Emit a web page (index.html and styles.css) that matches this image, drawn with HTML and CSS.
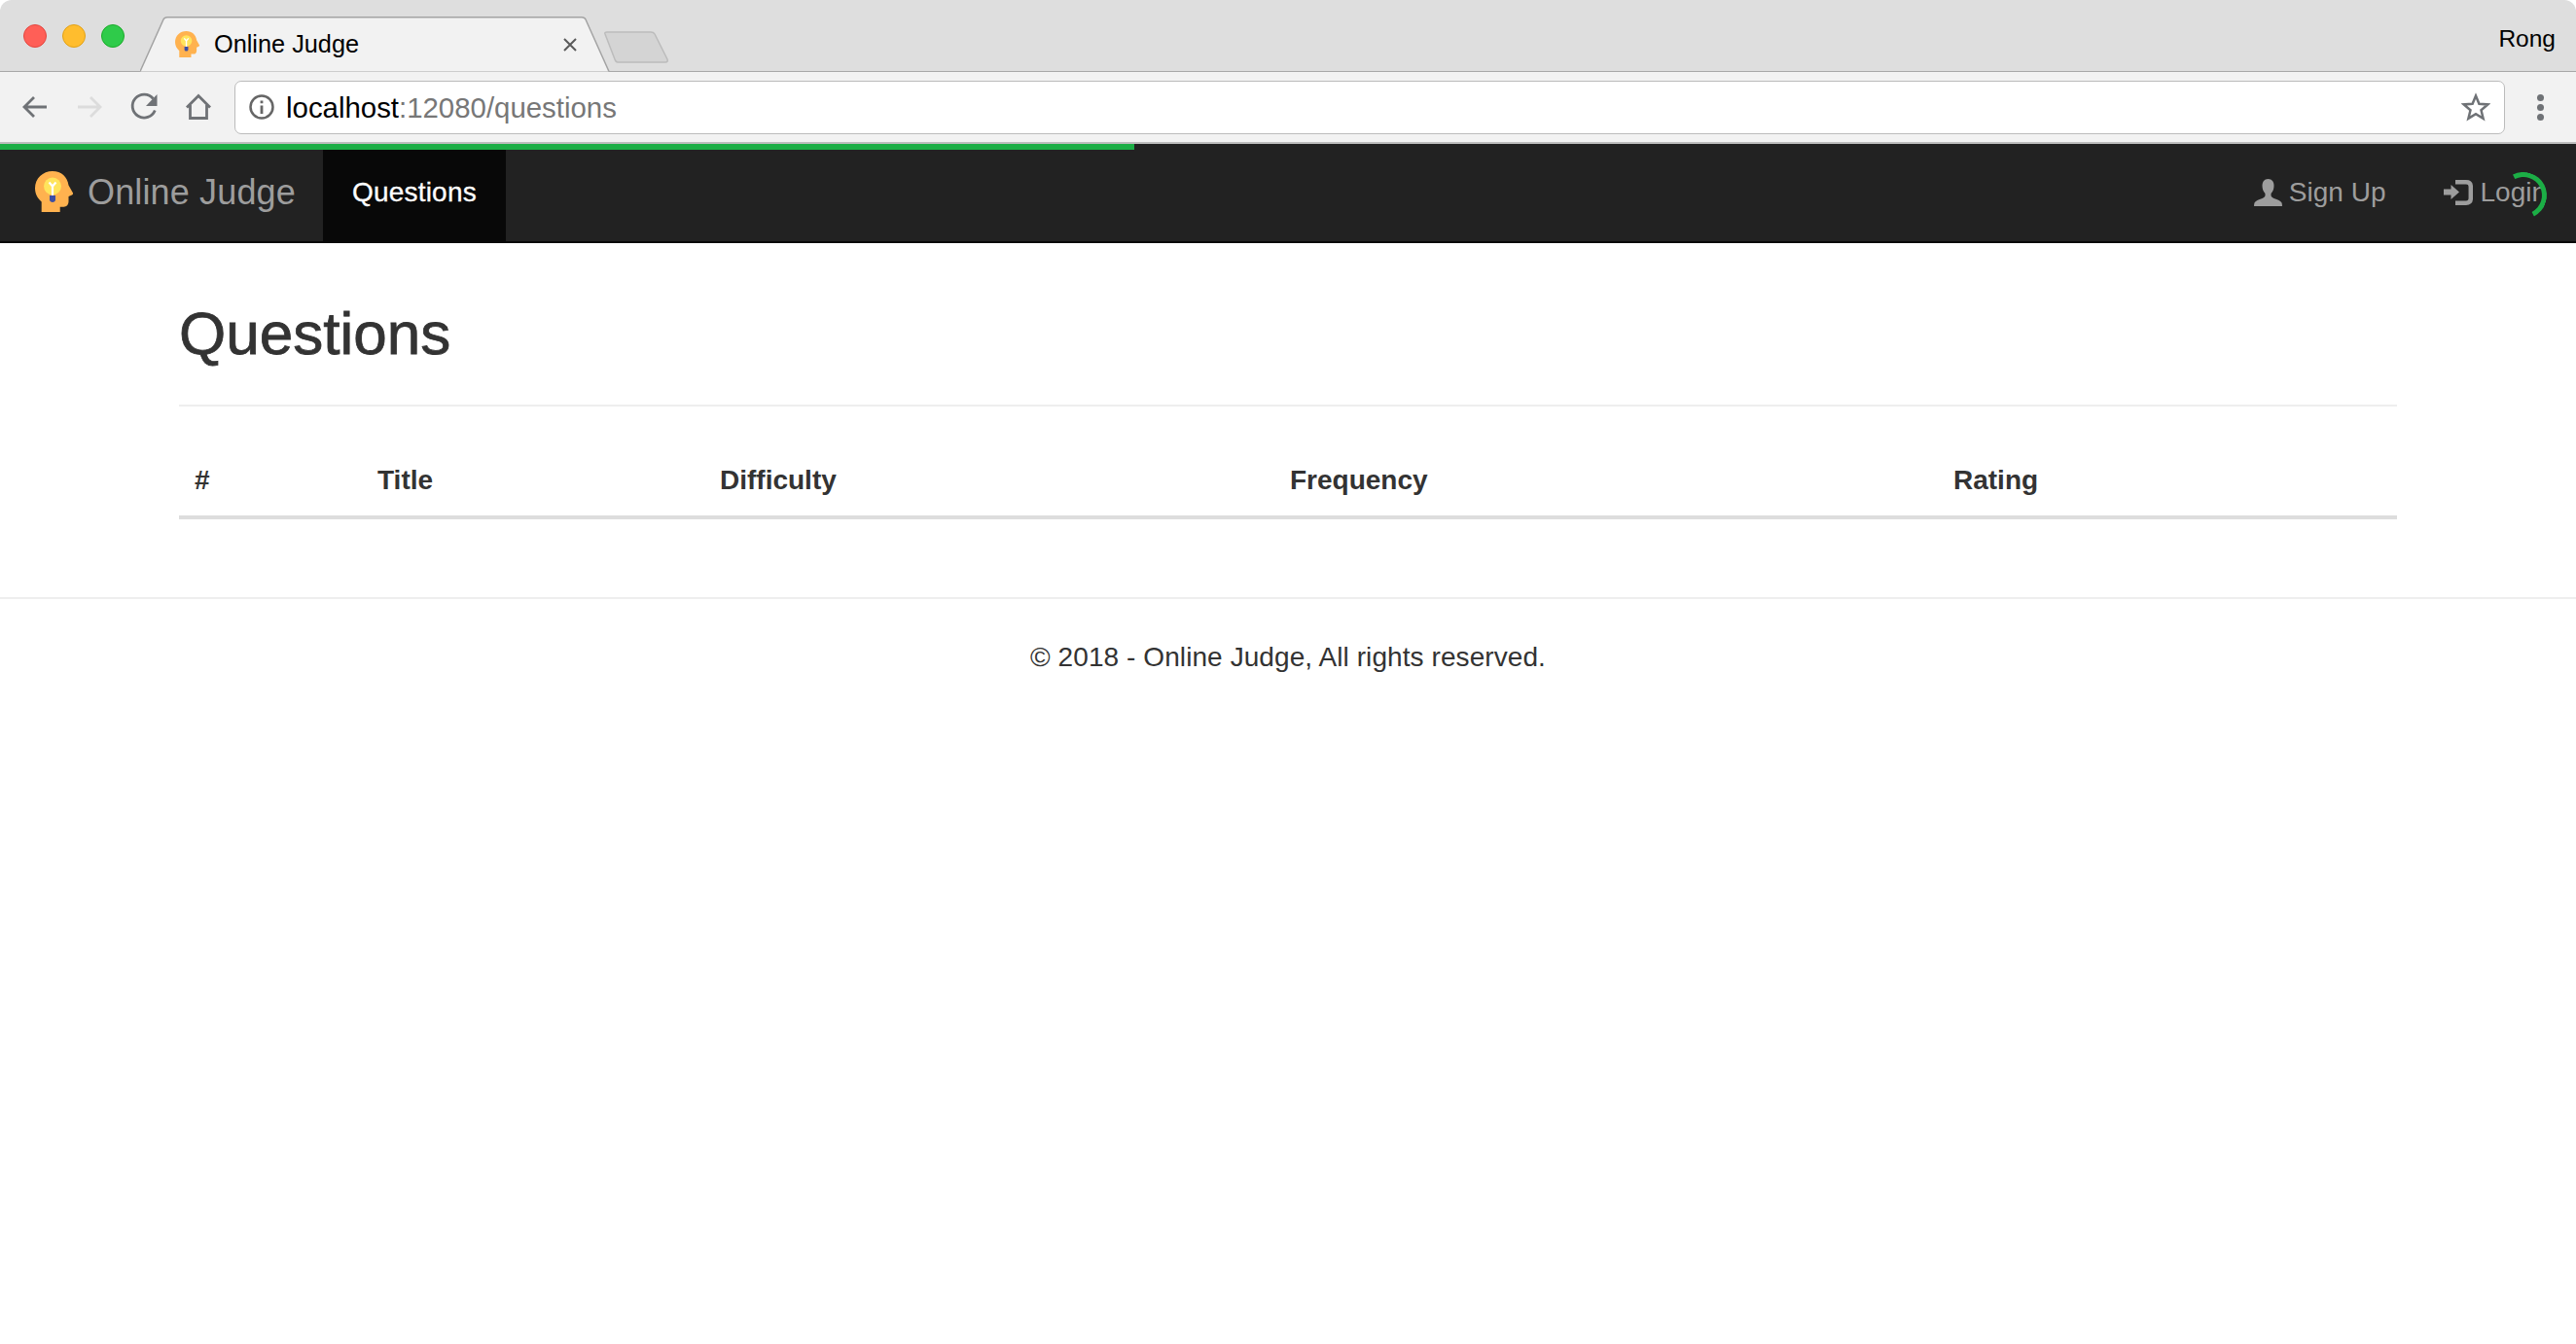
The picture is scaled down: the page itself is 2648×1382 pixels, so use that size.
FILE: index.html
```html
<!DOCTYPE html>
<html lang="en">
<head>
<meta charset="utf-8">
<title>Online Judge</title>
<link rel="stylesheet" href="styles.css">
</head>
<body>
<svg class="defs" width="0" height="0" aria-hidden="true">
  <symbol id="logo" viewBox="0 0 39 42">
    <path fill="#ffb24f" d="M6.700 42V31.500C2.500 28 0 23 0 17.500 0 7.500 8 0 18 0c9 0 15.500 6 16.500 14.500L39 22.500c.3.8-.2 1.500-1 2L34.500 26v5c0 3.500-2 5.700-5 5.700h-3.800V42z"/>
    <circle cx="18" cy="15.500" r="9" fill="#ffe45c"/>
    <path fill="none" stroke="#fff" stroke-width="2.200" d="M18 26V16M14.500 11.500 18 15.500 21.500 11.500"/>
    <path fill="#3d4fa3" d="M15 25h6v4.500c0 1.500-1.500 2.500-3 2.500s-3-1-3-2.500z"/>
  </symbol>
</svg>

<header class="browser">
  <div class="tabstrip">
    <div class="lights">
      <span class="light light-red"></span>
      <span class="light light-yellow"></span>
      <span class="light light-green"></span>
    </div>
    <div class="tab">
      <svg class="tab-shape" viewBox="0 0 484 57" width="484" height="57" aria-hidden="true">
        <path fill="#f2f2f2" stroke="#a3a3a3" stroke-width="1.500" d="M0 56.500 24 3Q25 .8 28 .8H454Q457 .8 458 3L482 56.500"/>
      </svg>
      <svg class="favicon" width="25" height="27"><use href="#logo"/></svg>
      <span class="tab-title">Online Judge</span>
      <svg class="tab-close" width="16" height="16" viewBox="0 0 16 16"><path fill="none" stroke="#5a5a5a" stroke-width="2" d="M2 2 14 14M14 2 2 14"/></svg>
    </div>
    <svg class="newtab" width="68" height="33" viewBox="0 0 68 33"><path fill="#d4d4d4" stroke="#bcbcbc" stroke-width="1.500" d="M2 3Q1 1 4 1H49Q52 1 53 3L66 29Q67 32 64 32H15Q13 32 12 29z"/></svg>
    <span class="profile">Rong</span>
  </div>
  <div class="toolbar">
    <span class="tool"><svg width="30" height="30" viewBox="0 0 30 30"><path class="ic" d="M27 15H4.500M14 5 4 15 14 25"/></svg></span>
    <span class="tool"><svg width="30" height="30" viewBox="0 0 30 30"><path class="ic ic-off" d="M3 15H25.500M16 5 26 15 16 25"/></svg></span>
    <span class="tool"><svg width="30" height="30" viewBox="0 0 30 30"><path class="ic" d="M24.500 6.500A12 12 0 1 0 26.300 18.500"/><path class="ic-fill" d="M28.500 2V14H17z"/></svg></span>
    <span class="tool"><svg width="30" height="30" viewBox="0 0 30 30"><path class="ic" d="M3 15.500 15 3.500 27 15.500M6.500 13V26.500H23.500V13"/></svg></span>
    <div class="omnibox">
      <svg class="info" width="28" height="28" viewBox="0 0 28 28"><circle cx="14" cy="14" r="11.500" fill="none" stroke="#666" stroke-width="2.500"/><path fill="#666" d="M12.600 7.500h2.800v2.800h-2.800zM12.600 12.500h2.800v8.500h-2.800z"/></svg>
      <span class="url"><span class="url-host">localhost</span>:12080/questions</span>
      <svg class="star" width="30" height="30" viewBox="0 0 30 30"><path fill="none" stroke="#6f7276" stroke-width="2.500" stroke-linejoin="miter" d="M15 3.500 18.400 11.700 27.300 12.400 20.500 18.200 22.600 26.800 15 22.200 7.400 26.800 9.500 18.200 2.700 12.400 11.600 11.700z"/></svg>
    </div>
    <div class="menu"><span class="dot"></span><span class="dot"></span><span class="dot"></span></div>
  </div>
</header>

<div class="viewport">
  <div class="progress"></div>
  <div class="spinner"></div>
  <nav class="navbar">
    <a class="brand"><svg class="brand-logo" width="39" height="42"><use href="#logo"/></svg>Online Judge</a>
    <a class="nav-item nav-active">Questions</a>
    <div class="nav-right">
      <a class="nav-item"><svg class="nav-ic" width="29" height="28" viewBox="0 0 29 28"><path fill="#9d9d9d" d="M14.500 0c-4 0-6 3-6 7 0 3 1 6 3 8v2c0 1-1 2-3 3-4 1.500-7 2.500-8 4.500-.3 1-.5 2.500-.5 3.500h29c0-1-.2-2.500-.5-3.500-1-2-4-3-8-4.500-2-1-3-2-3-3v-2c2-2 3-5 3-8 0-4-2-7-6-7z"/></svg>Sign Up</a>
      <a class="nav-item"><svg class="nav-ic" width="30" height="26" viewBox="0 0 30 26"><path fill="#9d9d9d" d="M0 9.500h7.500V5L16 12.500 7.500 20v-4.500H0z"/><path fill="none" stroke="#9d9d9d" stroke-width="4.500" d="M12 2.300H23Q27.800 2.300 27.800 7V19Q27.800 23.700 23 23.700H12"/></svg>Login</a>
    </div>
  </nav>

  <main class="container">
    <h1 class="page-title">Questions</h1>
    <table class="questions">
      <colgroup>
        <col class="col-id"><col class="col-title"><col class="col-diff"><col class="col-freq"><col class="col-rate">
      </colgroup>
      <thead>
        <tr><th>#</th><th>Title</th><th>Difficulty</th><th>Frequency</th><th>Rating</th></tr>
      </thead>
    </table>
  </main>

  <footer class="footer">© 2018 - Online Judge, All rights reserved.</footer>
</div>
</body>
</html>
```
FILE: styles.css
```css
* { box-sizing: border-box; }
html, body { margin: 0; padding: 0; background: #fff; }
body { font-family: "Liberation Sans", Arial, sans-serif; color: #333; font-size: 28px; line-height: 40px; }
.defs { position: absolute; }

.browser { border-radius: 12px 12px 0 0; overflow: hidden; }
.tabstrip { display: flex; align-items: flex-start; height: 74px; background: #dedede; border-bottom: 1px solid #a8a8a8; }
.lights { display: flex; gap: 16px; padding: 25px 16px 0 24px; }
.light { width: 24px; height: 24px; border-radius: 50%; border: 1px solid; }
.light-red { background: #ff5f57; border-color: #e2463f; }
.light-yellow { background: #ffbd2e; border-color: #e1a116; }
.light-green { background: #2fcb4a; border-color: #1aab29; }

.tab { position: relative; display: flex; align-items: center; width: 484px; height: 57px; margin-top: 17px; padding-left: 36px; color: #000; }
.tab-shape { position: absolute; left: 0; top: 0; }
.favicon, .tab-title, .tab-close { position: relative; }
.favicon { flex: none; margin-right: 15px; }
.tab-title { font-size: 25.300px; line-height: 30px; margin-top: -1px; }
.tab-close { margin-left: auto; margin-right: 34px; }
.newtab { margin: 32px 0 0 -8px; flex: none; }
.profile { margin-left: auto; padding: 20px 21px 0 0; font-size: 24.500px; line-height: 40px; color: #000; }

.toolbar { display: flex; align-items: center; height: 74px; padding-left: 8px; background: #f2f2f2; border-bottom: 2px solid #bdbdbd; }
.tool { display: flex; justify-content: center; width: 56px; flex: none; }
.ic { fill: none; stroke: #6f7276; stroke-width: 2.800; }
.ic-off { stroke: #dcdcdc; }
.ic-fill { fill: #6f7276; }
.omnibox { display: flex; align-items: center; flex: 1; height: 55px; margin-left: 9px; padding: 0 14px 0 13px; background: #fff; border: 1.500px solid #bbb; border-radius: 7px; }
.info { flex: none; margin-right: 11px; }
.url { font-size: 29.400px; line-height: 40px; color: #777; padding-top: 1px; }
.url-host { color: #000; }
.star { margin-left: auto; }
.menu { display: flex; flex-direction: column; align-items: center; gap: 3px; width: 73px; flex: none; }
.dot { width: 7px; height: 7px; border-radius: 50%; background: #6f7276; }

.viewport { position: relative; }
.progress { position: absolute; left: 0; top: 0; width: 1166px; height: 6px; background: #1cae46; }
.spinner { position: absolute; top: 29px; left: 2570px; width: 48px; height: 48px; border: 5px solid transparent; border-top-color: #1cae46; border-right-color: #1cae46; border-radius: 50%; transform: rotate(18deg); }

.navbar { display: flex; height: 102px; background: #222; border-bottom: 2px solid #080808; color: #9d9d9d; }
.brand { display: flex; align-items: center; width: 332px; padding-left: 36px; font-size: 36px; line-height: 40px; letter-spacing: 0.15px; }
.brand-logo { margin-right: 15px; margin-top: -2px; }
.nav-item { display: flex; align-items: center; padding: 0 30px; }
.nav-active { background: #080808; color: #fff; letter-spacing: 0.2px; -webkit-text-stroke: 0.3px #fff; }
.nav-right { display: flex; margin-left: auto; }
.nav-ic { margin-right: 7px; }

.container { width: 2280px; margin: 0 auto; padding: 60px 0 40px; }
.page-title { margin: 0 0 40px; padding-bottom: 40px; border-bottom: 2px solid #eee; font-size: 62px; line-height: 66px; font-weight: 500; -webkit-text-stroke: 0.8px #333; }
.questions { width: 100%; border-collapse: collapse; table-layout: fixed; }
.questions th { padding: 16px; text-align: left; font-weight: 700; border-bottom: 4px solid #ddd; }
.col-id { width: 188px; }
.col-title { width: 352px; }
.col-diff { width: 586px; }
.col-freq { width: 682px; }
.col-rate { width: 472px; }

.footer { margin-top: 40px; padding-top: 40px; border-top: 2px solid #eee; text-align: center; letter-spacing: 0.08px; }
```
